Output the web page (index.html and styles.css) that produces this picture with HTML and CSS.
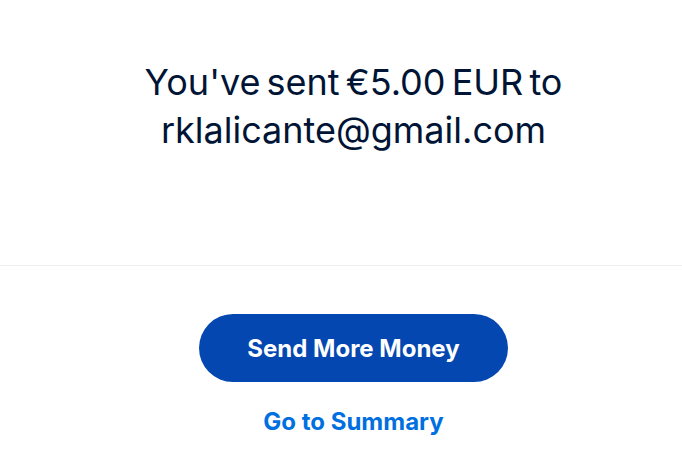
FILE: index.html
```html
<!DOCTYPE html>
<html lang="en">
<head>
<meta charset="utf-8">
<title>Sent</title>
<link rel="stylesheet" href="styles.css">
</head>
<body>
<main class="page">
  <section class="result">
    <h1 class="headline">You've sent €5.00 EUR to<br>rklalicante@gmail.com</h1>
  </section>
  <hr class="divider">
  <section class="actions">
    <a class="btn-primary" href="#">Send More Money</a>
    <a class="link" href="#">Go to Summary</a>
  </section>
</main>
</body>
</html>
```
FILE: styles.css
```css
html, body {
  margin: 0;
  padding: 0;
  background: #ffffff;
}
body {
  font-family: Inter, "Noto Sans", "Liberation Sans", sans-serif;
  color: #001435;
}
.page {
  display: flex;
  flex-direction: column;
}
.result {
  padding-top: 58px;
  padding-left: 25px;
  height: 265px;
  box-sizing: border-box;
  text-align: center;
}
.headline {
  margin: 0;
  font-size: 36px;
  font-weight: 400;
  line-height: 48px;
  word-spacing: -4px;
}
.divider {
  margin: 0;
  border: 0;
  height: 1px;
  background: #efefef;
}
.actions {
  display: flex;
  flex-direction: column;
  align-items: center;
  padding-top: 48px;
  padding-left: 25px;
}
.btn-primary {
  display: flex;
  align-items: center;
  justify-content: center;
  width: 309px;
  height: 68px;
  border-radius: 34px;
  background: #0447b0;
  color: #ffffff;
  font-weight: 700;
  font-size: 24px;
  text-decoration: none;
}
.link {
  margin-top: 26px;
  color: #0070e0;
  font-weight: 700;
  font-size: 24px;
  line-height: 28px;
  text-decoration: none;
}
```
